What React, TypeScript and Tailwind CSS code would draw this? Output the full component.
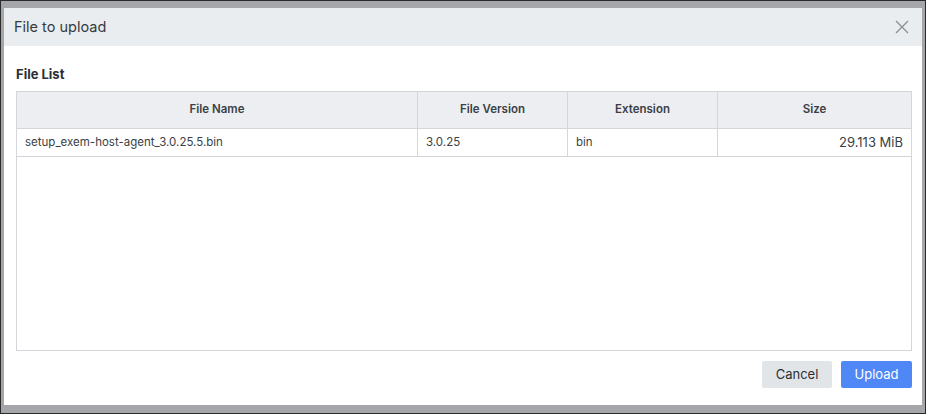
import React from 'react';

const columns = [
  { label: 'File Name', width: 'w-[401px]' },
  { label: 'File Version', width: 'w-[150px]' },
  { label: 'Extension', width: 'w-[150px]' },
  { label: 'Size', width: 'flex-1' },
];

const App: React.FC = () => {
  return (
    <div className="w-[926px] h-[414px] border border-[#2a2a2a] bg-[#a4a6a9] pt-[7px] pl-[3px] font-['Inter',sans-serif] overflow-hidden">
      <div className="w-[918px] h-[397px] bg-white flex flex-col">
        {/* header */}
        <div className="h-[38px] bg-[#eaedf0] flex items-center justify-between pl-[10px] pr-[13px] shrink-0">
          <span className="text-[14.5px] text-[#343a40]">File to upload</span>
          <button className="text-[#8a8f96]">
            <svg width="14" height="14" viewBox="0 0 14 14" fill="none" stroke="currentColor" strokeWidth="1.3">
              <path d="M1 1L13 13M13 1L1 13" />
            </svg>
          </button>
        </div>

        {/* body */}
        <div className="flex-1 flex flex-col pl-3 pr-[10px] pt-[20px]">
          <div className="text-[13px] font-bold text-[#2b2f33] leading-4">File List</div>
          <div className="mt-[9px] w-[896px] h-[260px] border border-[#d3d6db] flex flex-col">
            <div className="flex h-[37px] bg-[#eceef1] border-b border-[#d3d6db]">
              {columns.map((c, i) => (
                <div
                  key={c.label}
                  className={`${c.width} flex items-center justify-center text-[11.5px] font-semibold text-[#3a3f45] ${i < columns.length - 1 ? 'border-r border-[#d3d6db]' : ''}`}
                >
                  {c.label}
                </div>
              ))}
            </div>
            <div className="flex h-[28px] border-b border-[#d3d6db] text-[11.5px] text-[#3a3f45]">
              <div className="w-[401px] flex items-center px-2 border-r border-[#d3d6db]">setup_exem-host-agent_3.0.25.5.bin</div>
              <div className="w-[150px] flex items-center px-2 border-r border-[#d3d6db]">3.0.25</div>
              <div className="w-[150px] flex items-center px-2 border-r border-[#d3d6db]">bin</div>
              <div className="flex-1 flex items-center justify-end px-2 text-[13px]">29.113 MiB</div>
            </div>
          </div>

          <div className="flex justify-end gap-[9px] mt-[10px]">
            <button className="w-[70px] h-[27px] rounded-[2px] bg-[#e2e5e8] text-[13px] text-[#2b2f33]">Cancel</button>
            <button className="w-[71px] h-[27px] rounded-[2px] bg-[#4f88f6] text-[13px] text-white">Upload</button>
          </div>
        </div>
      </div>
    </div>
  );
};

export default App;
